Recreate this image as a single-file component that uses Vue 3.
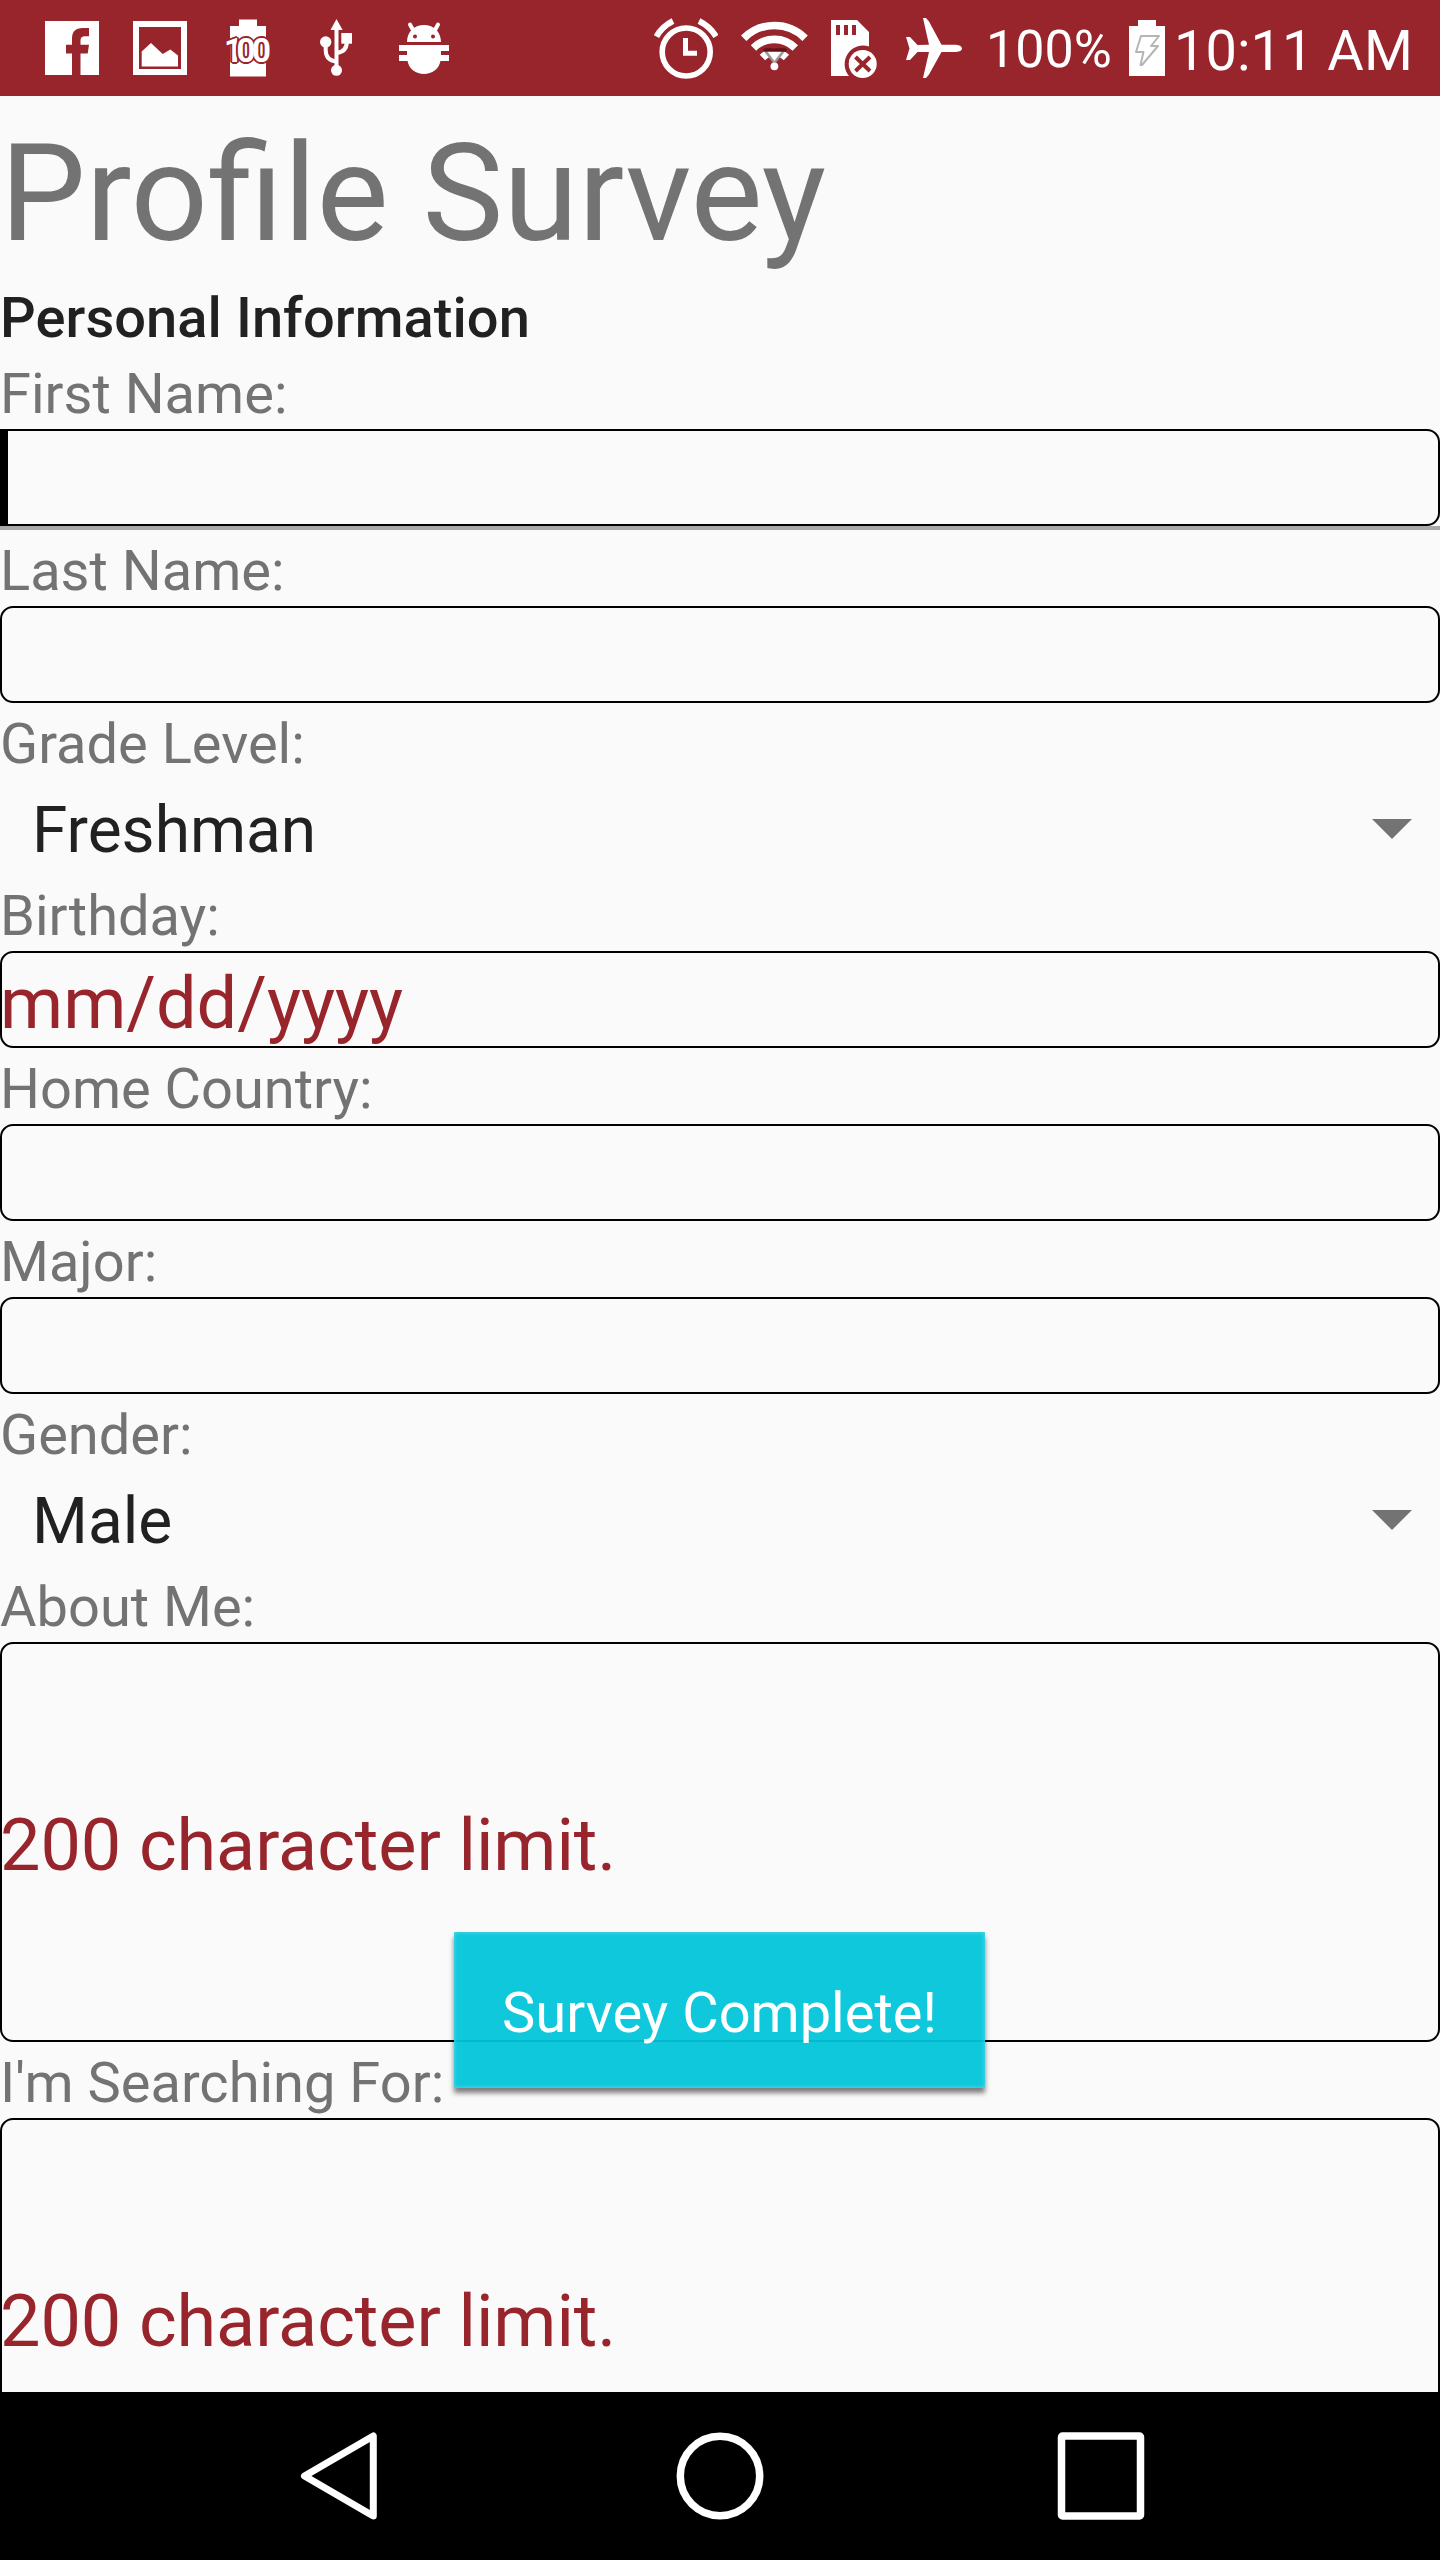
<script setup>
const fields = [
  { label: 'First Name:', type: 'input', focused: true },
  { label: 'Last Name:', type: 'input' },
  { label: 'Grade Level:', type: 'spinner', value: 'Freshman' },
  { label: 'Birthday:', type: 'input', hint: 'mm/dd/yyyy' },
  { label: 'Home Country:', type: 'input' },
  { label: 'Major:', type: 'input' },
  { label: 'Gender:', type: 'spinner', value: 'Male' },
  { label: 'About Me:', type: 'area', hint: '200 character limit.' },
  { label: "I'm Searching For:", type: 'area', hint: '200 character limit.' },
]
</script>

<template>
  <div class="screen">
    <header class="status">
      <div class="left">
        <!-- facebook -->
        <svg width="54" height="96" viewBox="45 0 54 96">
          <path fill="#fff" d="M45 21H99V75H80.500V53.500H87.700L89 44.700H80.500V40.500Q80.500 36.300 85 36.300H89V28H82.500Q72 28 72 38.500V44.700H66V53.500H72V75H45Z" />
        </svg>
        <!-- gallery -->
        <svg class="gallery" width="54" height="96" viewBox="133 0 54 96">
          <path fill="#fff" fill-rule="evenodd" d="M133 21H187V75H133ZM139 27V69H181V27Z" />
          <path fill="#fff" d="M141.700 66.500V51.500L151 43L162.700 54L170.300 49.500L178 55.500V66.500Z" />
        </svg>
        <!-- battery level -->
        <div class="charge">
          <svg width="54" height="96" viewBox="221 0 54 96">
            <path fill="#fff" d="M239 19.500H257V26H266V76.500H230V26H239Z" />
          </svg>
          <span class="level"><span class="one">1</span>00</span>
        </div>
        <!-- usb -->
        <svg class="usb" width="32" height="96" viewBox="320 0 32 96">
          <g fill="#fff">
            <path d="M336.500 19L342.600 30H330.500Z" />
            <rect x="341.300" y="33" width="10.700" height="10.700" />
            <circle cx="325.700" cy="42" r="5.700" />
            <circle cx="336.500" cy="70.300" r="5.500" />
          </g>
          <path fill="none" stroke="#fff" stroke-width="4" d="M336.500 28V68M325.700 45V50Q325.700 60.500 336.500 61.500M346.700 42Q347 51.500 336.500 53" />
        </svg>
        <!-- debugging -->
        <svg class="bug" width="50" height="96" viewBox="399 0 50 96">
          <path fill="#fff" d="M407 42C407 32 414 25 424 25S441 32 441 42ZM399 45H449V51H441V55H449V61H440.500C439 69 432 74 424 74S409 69 407.500 61H399V55H407V51H399Z" />
          <path stroke="#fff" stroke-width="4" stroke-linecap="round" d="M410 24.500L414 32M438 24.500L434 32" />
          <circle cx="415" cy="36.500" r="2" fill="#98252c" />
          <circle cx="433" cy="36.500" r="2" fill="#98252c" />
        </svg>
      </div>
      <div class="right">
        <!-- alarm -->
        <svg class="alarm" width="64" height="96" viewBox="654 0 64 96">
          <g fill="none" stroke="#fff">
            <circle cx="686.200" cy="52" r="24" stroke-width="5.600" />
            <path stroke-width="5" d="M685.500 38V53.300H697" />
            <path stroke-width="6" d="M656.500 36.500Q662 26.500 673 21M716 36.500Q710 26.500 699 21" />
          </g>
        </svg>
        <!-- wifi -->
        <svg class="wifi" width="67" height="96" viewBox="741 0 67 96">
          <g fill="none" stroke="#fff" stroke-width="7.600">
            <path d="M743.700 38.200A43.400 43.400 0 0 1 805.100 38.200" />
            <path d="M753.500 48A29.600 29.600 0 0 1 795.300 48" />
            <path d="M762.400 57.500A17 17 0 0 1 786.400 57.500" />
          </g>
          <path fill="#fff" d="M764 50H785L774.400 64Z" />
          <path fill="none" stroke="#98252c" stroke-width="3" d="M760.500 59.500L774.400 70L788 59.500" opacity=".5" />
          <path fill="none" stroke="#888" stroke-width="2.600" d="M765 50.500L774.400 63L784 50.500" opacity=".85" />
          <path stroke="#621317" stroke-width="3.600" stroke-linecap="round" d="M765 50H785" />
          <circle cx="774.400" cy="66.300" r="3.900" fill="#fff" />
        </svg>
        <!-- sd card unavailable -->
        <svg class="sd" width="46" height="96" viewBox="831 0 46 96">
          <path fill="#fff" d="M831 20H857L869 32V46.500A18.500 18.500 0 0 0 849 76H831Z" />
          <path fill="#98252c" d="M836 25H840V35H836ZM844 25H848V35H844ZM852 25H856V35H852Z" />
          <circle cx="862.700" cy="64" r="14" fill="#fff" />
          <path stroke="#98252c" stroke-width="4" d="M855.500 57L870 71M870 57L855.500 71" />
        </svg>
        <!-- airplane mode -->
        <svg class="plane" width="56" height="96" viewBox="906 0 56 96">
          <path fill="#fff" d="M923 18H926L929 21.500L941.500 44.700H956Q962 45.500 962 48.500T956 52H941.500L929 74.500L926 78H923L929 52H917.500L910 60H906L909.500 48.500L906 37H910L917.500 45L929 44.700Z" />
        </svg>
        <span class="percent">100%</span>
        <svg class="battery" width="36" height="96" viewBox="1129 0 36 96">
          <path fill="#fff" d="M1138 20H1156V26H1165V76H1129V26H1138Z" />
          <path fill="none" stroke="#b5b5b5" stroke-width="2" stroke-linejoin="round" d="M1141 36H1159L1151 46H1158L1142 65H1140.500L1143.500 52H1136Z" />
        </svg>
        <span class="time">10:11 AM</span>
      </div>
    </header>

    <main class="form">
      <h1>Profile Survey</h1>
      <h2>Personal Information</h2>
      <section v-for="f in fields" :key="f.label">
        <label>{{ f.label }}</label>
        <div v-if="f.type === 'spinner'" class="spinner">
          <span>{{ f.value }}</span>
          <svg width="40" height="20" viewBox="0 0 40 20"><path fill="#737373" d="M0 0H40L20 20Z" /></svg>
        </div>
        <div v-else :class="['box', f.type, { focused: f.focused }]">{{ f.hint }}</div>
        <div v-if="f.focused" class="underline"></div>
      </section>
    </main>

    <div class="toast">Survey Complete!</div>

    <nav class="nav">
      <svg width="78" height="90" viewBox="0 0 78 90">
        <path fill="none" stroke="#fff" stroke-width="7" stroke-linejoin="round" d="M73.300 5V85L4.500 45Z" />
      </svg>
      <svg width="92" height="90" viewBox="0 0 92 90">
        <circle cx="48" cy="45" r="39.700" fill="none" stroke="#fff" stroke-width="7.500" />
      </svg>
      <svg width="88" height="90" viewBox="0 0 88 90">
        <rect x="4.500" y="5" width="79" height="80" rx="1" fill="none" stroke="#fff" stroke-width="7.500" />
      </svg>
    </nav>
  </div>
</template>

<style>
body {
  margin: 0;
}
</style>

<style scoped>
.screen {
  position: relative;
  display: flex;
  flex-direction: column;
  width: 1440px;
  height: 2560px;
  overflow: hidden;
  background: #fafafa;
  color: #737373;
  font-family: Roboto, sans-serif;
}
svg {
  display: block;
  flex: none;
}
.status {
  flex: none;
  display: flex;
  justify-content: space-between;
  height: 96px;
  background: #98252c;
  color: #fff;
}
.left {
  display: flex;
  padding-left: 45px;
}
.gallery {
  margin-left: 34px;
}
.charge {
  position: relative;
  width: 54px;
  margin-left: 34px;
}
.usb {
  margin-left: 45px;
}
.bug {
  margin-left: 47px;
}
.level {
  position: absolute;
  left: 3px;
  top: 31px;
  font-size: 33px;
  font-weight: 700;
  line-height: 40px;
  letter-spacing: -3.4px;
  white-space: nowrap;
  text-shadow: 2px 0 #98252c, -2px 0 #98252c, 0 2px #98252c, 0 -2px #98252c,
    1.4px 1.4px #98252c, -1.4px 1.4px #98252c, 1.4px -1.4px #98252c, -1.4px -1.4px #98252c;
}
.one {
  letter-spacing: -6.500px;
}
.right {
  display: flex;
  width: 786px;
  white-space: nowrap;
}
.wifi {
  margin-left: 23px;
}
.sd {
  margin-left: 23px;
}
.plane {
  margin-left: 29px;
}
.percent {
  width: 143px;
  margin-left: 24px;
  font-size: 52px;
  line-height: 99px;
}
.time {
  margin-left: 9px;
  font-size: 56px;
  line-height: 102px;
}
.form {
  flex: 1;
  min-height: 0;
  overflow: hidden;
}
h1 {
  margin: 0;
  padding-top: 14px;
  font-size: 136px;
  font-weight: 400;
  line-height: 167px;
}
h2,
label {
  display: block;
  margin: 0;
  padding-top: 6px;
  font-size: 56px;
  line-height: 70px;
}
h2 {
  color: #212121;
  font-weight: 500;
  letter-spacing: 0.07px;
}
.box {
  box-sizing: border-box;
  height: 97px;
  padding-top: 6px;
  border: 2px solid #000;
  border-radius: 13px;
  color: #98252c;
  font-size: 72px;
  line-height: 89px;
  text-indent: -2px;
}
.area {
  height: 400px;
  padding-top: 5px;
  line-height: 393px;
  letter-spacing: -0.08px;
}
.focused {
  box-shadow: inset 6px 0 #000;
  border-radius: 0 13px 13px 0;
}
.underline {
  height: 4px;
  background: #a9a9a9;
}
.spinner {
  box-sizing: border-box;
  display: flex;
  justify-content: space-between;
  height: 96px;
  padding: 7px 28px 0 32px;
  color: #212121;
  font-size: 64px;
  line-height: 90px;
}
.spinner svg {
  margin-top: 33px;
}
.toast {
  position: absolute;
  left: 454px;
  top: 1932px;
  box-sizing: border-box;
  width: 531px;
  height: 156px;
  padding-top: 1px;
  background: rgba(0, 197, 218, 0.94);
  box-shadow: 0 5px 5px rgba(0, 0, 0, 0.5), inset 0 0 4px rgba(255, 255, 255, 0.35);
  color: #fff;
  font-size: 56px;
  line-height: 160px;
  text-align: center;
}
.nav {
  flex: none;
  display: flex;
  align-items: center;
  justify-content: space-between;
  box-sizing: border-box;
  height: 168px;
  padding: 0 295px 0 300px;
  background: #000;
}
</style>
